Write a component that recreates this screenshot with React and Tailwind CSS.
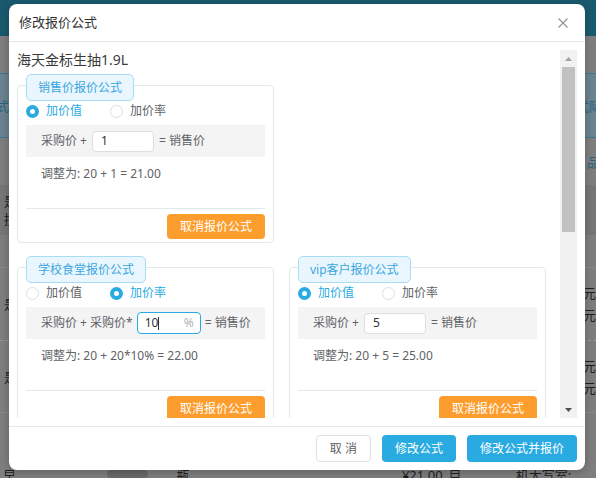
import React from "react";

const cards = [
  { title: "销售价报价公式", mode: "value", value: "1", result: "调整为: 20 + 1 = 21.00" },
  { title: "学校食堂报价公式", mode: "rate", value: "10", result: "调整为: 20 + 20*10% = 22.00" },
  { title: "vip客户报价公式", mode: "value", value: "5", result: "调整为: 20 + 5 = 25.00" },
];

function Radio({ checked, label }) {
  return (
    <div className="mr-[28px] flex items-center gap-[7px]">
      {checked ? (
        <span className="flex h-[13px] w-[13px] items-center justify-center rounded-full bg-[#29abe2]">
          <span className="h-[5px] w-[5px] rounded-full bg-white" />
        </span>
      ) : (
        <span className="h-[13px] w-[13px] rounded-full border border-[#dcdfe6] bg-white" />
      )}
      <span className={checked ? "text-[#29abe2]" : "text-[#606266]"}>{label}</span>
    </div>
  );
}

function FormulaCard({ card }) {
  const rate = card.mode === "rate";
  return (
    <div className="w-[257px] rounded border border-[#e4e7ed] bg-white px-[8px] pb-[3px] text-[12px]">
      <div className="-mt-[12px] flex h-[27px] w-fit items-center rounded-[5px] border border-[#a9ddf6] bg-[#e9f6fd] px-[11px] text-[#3aa6df]">
        {card.title}
      </div>
      <div className="flex h-[20px] items-center">
        <Radio checked={!rate} label="加价值" />
        <Radio checked={rate} label="加价率" />
      </div>
      <div className="mt-[4px] flex h-[32px] items-center bg-[#f4f4f5] pl-[15px] text-[#606266]">
        {rate ? (
          <>
            <span>采购价 + 采购价*</span>
            <div className="mx-[4px] flex h-[22px] w-[64px] items-center rounded border border-[#29abe2] bg-white pl-[7px] pr-[6px]">
              <span className="text-[#303133]">{card.value}</span>
              <span className="h-[13px] w-px bg-[#303133]" />
              <span className="ml-auto text-[#b0b3b8]">%</span>
            </div>
            <span>= 销售价</span>
          </>
        ) : (
          <>
            <span>采购价 +</span>
            <div className="mx-[5px] flex h-[21px] w-[62px] items-center rounded border border-[#dcdfe6] bg-white pl-[8px] text-[#303133]">
              {card.value}
            </div>
            <span>= 销售价</span>
          </>
        )}
      </div>
      <div className="mt-[7px] h-[20px] pl-[15px] leading-[20px] text-[#606266]">{card.result}</div>
      <div className="mt-[24px] border-t border-[#e4e7ed]" />
      <div className="mt-[5px] flex justify-end">
        <div className="flex h-[25px] items-center rounded bg-[#fd9d2e] px-[13px] text-white">取消报价公式</div>
      </div>
    </div>
  );
}

function Arrow({ up, color }) {
  return (
    <div className="flex h-[17px] items-center justify-center">
      <svg width="7" height="4" viewBox="0 0 7 4">
        <path d={up ? "M0 4 L3.5 0 L7 4Z" : "M0 0 L3.5 4 L7 0Z"} fill={color} />
      </svg>
    </div>
  );
}

export default function App() {
  return (
    <div className="relative h-[478px] w-[596px] overflow-hidden bg-[#7f7f7f] font-['Noto_Sans','Noto_Sans_CJK_SC',sans-serif]">
      {/* dimmed page behind the dialog */}
      <div className="flex flex-col text-[13px] leading-[16px] text-[#1f1f1f]">
        <div className="h-[36px] bg-[#1a5a6e]" />
        <div className="h-[37px]" />
        <div className="flex h-[65px] items-center justify-between border-y border-[#3b7897] bg-[#6b8490] text-[#2d6384]">
          <span className="-ml-[4px]">式</span>
          <span className="-mr-[6px]">式际</span>
        </div>
        <div className="flex h-[47px] items-center justify-end text-[#2d6384]">
          <span className="-mr-[4px]">品</span>
        </div>
        <div className="flex h-[50px] flex-col justify-center gap-[2px] bg-[#777777] pl-[4px]">
          <span>是</span>
          <span>控</span>
        </div>
        <div className="h-[32px]" />
        <div className="flex h-[73px] items-center justify-between border-t border-[#8a8a8a] pl-[4px]">
          <span>是</span>
          <span className="flex flex-col gap-[6px]">
            <span>元</span>
            <span>元</span>
          </span>
        </div>
        <div className="flex h-[72px] items-center justify-between border-t border-dashed border-[#9a9a9a] pl-[4px]">
          <span>是</span>
          <span className="flex flex-col gap-[6px]">
            <span>元</span>
            <span>元</span>
          </span>
        </div>
        <div className="h-[55px] border-t border-[#8a8a8a]" />
        <div className="flex h-[30px] items-start pl-[3px]">
          <span className="w-[105px]">早</span>
          <span className="mt-[3px] h-[8px] w-[42px] rounded-sm bg-[#6a6a6a]" />
          <span className="ml-[28px] w-[228px]">瓶</span>
          <span className="w-[47px]">¥21.00</span>
          <span className="w-[68px]">目</span>
          <span>机大写室: ¥20</span>
        </div>
      </div>

      {/* dialog */}
      <div className="absolute left-[9px] top-[4px] flex h-[466px] w-[576px] flex-col rounded-lg bg-white shadow-[0_2px_10px_rgba(0,0,0,0.25)]">
        <div className="flex h-[38px] items-center justify-between border-b border-[#e4e7ed] pl-[10px] pr-[17px]">
          <span className="text-[13px] text-[#303133]">修改报价公式</span>
          <svg width="10" height="10" viewBox="0 0 10 10">
            <path d="M0.5 0.5 L9.5 9.5 M9.5 0.5 L0.5 9.5" stroke="#909399" strokeWidth="1.1" />
          </svg>
        </div>

        <div className="h-[384px] p-[8px]">
          <div className="flex h-[368px]">
            <div className="flex-1 overflow-hidden">
              <div className="h-[20px] text-[14px] leading-[20px] text-[#3a3a3a]">海天金标生抽1.9L</div>
              <div className="mt-[15px]">
                <FormulaCard card={cards[0]} />
              </div>
              <div className="mt-[24px] flex gap-[15px]">
                <FormulaCard card={cards[1]} />
                <FormulaCard card={cards[2]} />
              </div>
            </div>
            <div className="flex w-[17px] flex-col bg-[#f1f1f1]">
              <Arrow up color="#a3a3a3" />
              <div className="mx-[2px] h-[165px] bg-[#c1c1c1]" />
              <div className="flex-1" />
              <Arrow color="#505050" />
            </div>
          </div>
        </div>

        <div className="flex h-[44px] items-center justify-end gap-[11px] border-t border-[#e4e7ed] pr-[8px] text-[12px]">
          <div className="flex h-[27px] items-center rounded border border-[#dcdfe6] bg-white px-[13px] text-[#606266]">取 消</div>
          <div className="flex h-[27px] items-center rounded bg-[#29abe2] px-[13px] text-white">修改公式</div>
          <div className="flex h-[27px] items-center rounded bg-[#29abe2] px-[13px] text-white">修改公式并报价</div>
        </div>
      </div>
    </div>
  );
}
